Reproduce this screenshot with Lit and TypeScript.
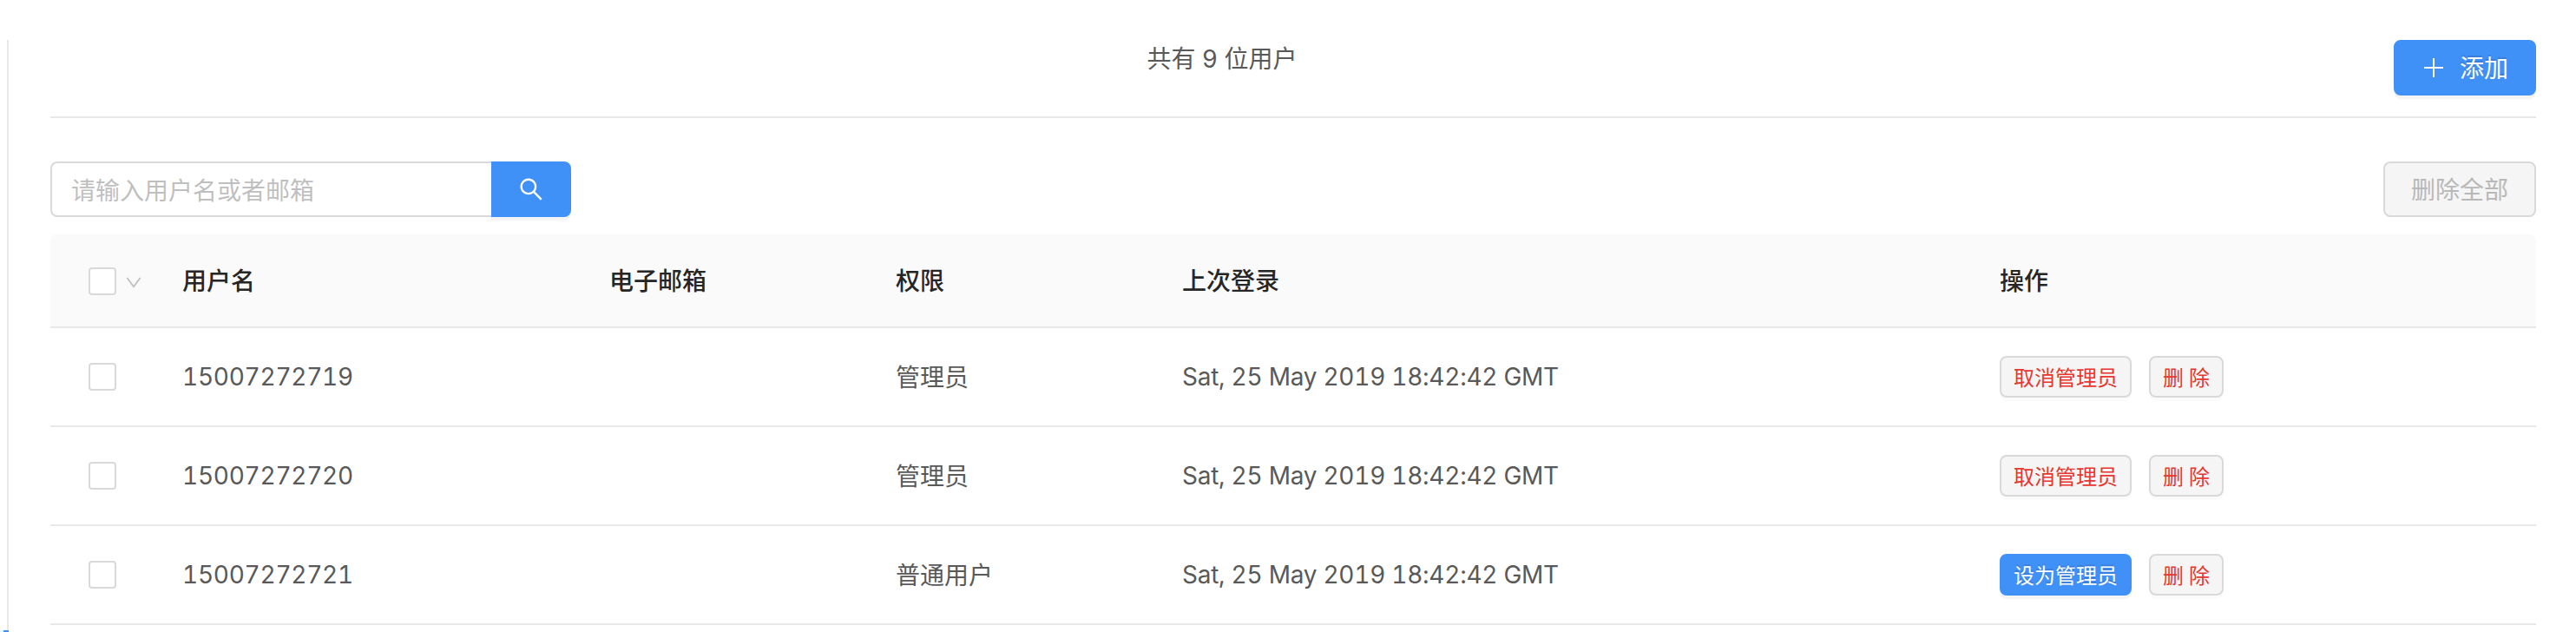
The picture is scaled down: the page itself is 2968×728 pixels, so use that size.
import { LitElement, html, css, nothing } from "lit";
import { customElement, property, state } from "lit/decorators.js";
import { classMap } from "lit/directives/class-map.js";

interface User {
  name: string;
  email: string;
  admin: boolean;
  lastLogin: string;
}

const FONT = css`"Inter", "Noto Sans CJK SC", sans-serif`;

@customElement("ui-button")
class UiButton extends LitElement {
  @property() kind = "default";
  @property() size = "large";
  @property({ type: Boolean }) disabled = false;

  static styles = css`
    :host { display: inline-block; }
    .btn {
      display: flex;
      align-items: center;
      justify-content: center;
      box-sizing: border-box;
      height: 64px;
      margin: 0;
      padding: 0 30px;
      border: 2px solid #d9d9d9;
      border-radius: 8px;
      background: #f5f5f5;
      color: #595959;
      font: 400 28px/40px ${FONT};
      white-space: pre;
      box-shadow: 0 4px 0 rgba(0, 0, 0, 0.015);
    }
    .label { padding-top: 2px; }
    .small { height: 48px; padding: 0 14px; font-size: 24px; word-spacing: -0.7px; }
    .small .label { padding-top: 3px; }
    .danger { color: #e8362f; }
    .primary {
      color: #fff;
      background: #4091f7;
      border-color: #4091f7;
      text-shadow: 0 -2px 0 rgba(0, 0, 0, 0.12);
      box-shadow: 0 4px 0 rgba(0, 0, 0, 0.045);
    }
    .off { color: #b8b8b8; box-shadow: none; }
    ::slotted(svg) { display: block; margin-right: 16px; }
  `;

  render() {
    const classes = {
      btn: true,
      small: this.size === "small",
      primary: this.kind === "primary",
      danger: this.kind === "danger",
      off: this.disabled,
    };
    return html`<button class=${classMap(classes)} ?disabled=${this.disabled}><slot name="icon"></slot><span class="label"><slot></slot></span></button>`;
  }
}

@customElement("app-root")
class AppRoot extends LitElement {
  @state() private total = 9;
  @state() private users: User[] = [
    { name: "15007272719", email: "", admin: true, lastLogin: "Sat, 25 May 2019 18:42:42 GMT" },
    { name: "15007272720", email: "", admin: true, lastLogin: "Sat, 25 May 2019 18:42:42 GMT" },
    { name: "15007272721", email: "", admin: false, lastLogin: "Sat, 25 May 2019 18:42:42 GMT" },
  ];

  static styles = css`
    :host {
      display: flex;
      height: 728px;
      box-sizing: border-box;
      padding-top: 46px;
      overflow: hidden;
      background: #fff;
      color: #595959;
      font: 400 28px/42px ${FONT};
    }
    .menu {
      flex: none;
      width: 10px;
      display: flex;
      flex-direction: column;
    }
    .edge {
      flex: 1;
      border-right: 2px solid #e8e8e8;
    }
    .selected {
      flex: none;
      height: 2px;
      background: #e6f7ff;
      display: flex;
      justify-content: flex-end;
    }
    .bar { width: 6px; background: #4091f7; }
    .content { flex: 1; min-width: 0; padding: 0 46px 0 48px; }
    .head {
      display: flex;
      justify-content: space-between;
      align-items: flex-start;
      height: 88px;
      border-bottom: 2px solid #e8e8e8;
    }
    .count { padding-top: 1px; }
    .tools {
      display: flex;
      justify-content: space-between;
      padding: 50px 0 20px;
    }
    .search { display: flex; width: 600px; height: 64px; }
    .field {
      flex: 1;
      min-width: 0;
      box-sizing: border-box;
      padding: 4px 22px 0;
      border: 2px solid #d9d9d9;
      border-right: 0;
      border-radius: 8px 0 0 8px;
      outline: 0;
      background: #fff;
      font: 400 28px/42px ${FONT};
    }
    .field::placeholder { color: #bfbfbf; opacity: 1; }
    .go {
      display: flex;
      align-items: center;
      justify-content: center;
      width: 92px;
      padding: 0;
      border: 0;
      border-radius: 0 8px 8px 0;
      background: #4091f7;
      color: #fff;
      box-shadow: 0 4px 0 rgba(0, 0, 0, 0.045);
    }
    .row {
      display: grid;
      grid-template-columns: 152px 492px 330px 330px 942px 1fr;
      align-items: center;
      height: 112px;
      border-bottom: 2px solid #e8e8e8;
    }
    .title {
      height: 104px;
      padding-top: 2px;
      border-radius: 8px 8px 0 0;
      background: #fafafa;
      color: #262626;
      font-weight: 500;
    }
    .pick { display: flex; align-items: center; padding-left: 44px; gap: 10px; }
    .box {
      width: 32px;
      height: 32px;
      box-sizing: border-box;
      border: 2px solid #d9d9d9;
      border-radius: 4px;
      background: #fff;
    }
    .num {
      font-feature-settings: "tnum";
      letter-spacing: -0.26px;
      white-space: nowrap;
    }
    .role { padding-top: 2px; }
    .ops { display: flex; gap: 20px; }
    svg { display: block; }
  `;

  private row(u: User) {
    return html`
      <div class="row">
        <div class="pick"><span class="box"></span></div>
        <div class="num">${u.name}</div>
        <div>${u.email || nothing}</div>
        <div class="role">${u.admin ? "管理员" : "普通用户"}</div>
        <div class="num">${u.lastLogin}</div>
        <div class="ops">
          <ui-button size="small" kind=${u.admin ? "danger" : "primary"}>${u.admin ? "取消管理员" : "设为管理员"}</ui-button>
          <ui-button size="small" kind="danger">删 除</ui-button>
        </div>
      </div>
    `;
  }

  render() {
    return html`
      <aside class="menu">
        <div class="edge"></div>
        <div class="selected"><span class="bar"></span></div>
      </aside>
      <main class="content">
        <header class="head">
          <span></span>
          <span class="count">共有 ${this.total} 位用户</span>
          <ui-button kind="primary"><svg slot="icon" width="28" height="28" viewBox="0 0 28 28" fill="none" stroke="currentColor" stroke-width="2"><path d="M14 3v22M3 14h22"/></svg>添加</ui-button>
        </header>
        <section class="tools">
          <div class="search">
            <input class="field" placeholder="请输入用户名或者邮箱" />
            <button class="go">
              <svg width="32" height="32" viewBox="0 0 1024 1024" fill="currentColor">
                <path d="M909.6 854.5L649.9 594.8C690.2 542.7 712 479 712 412c0-80.2-31.3-155.4-87.9-212.1-56.6-56.7-132-87.9-212.1-87.9s-155.5 31.3-212.1 87.9C143.2 256.5 112 331.8 112 412c0 80.1 31.3 155.5 87.9 212.1C256.5 680.8 331.8 712 412 712c67 0 130.6-21.8 182.7-62l259.7 259.6a8.2 8.2 0 0 0 11.6 0l43.6-43.5a8.2 8.2 0 0 0 0-11.6zM570.4 570.4C528 612.7 471.8 636 412 636s-116-23.3-158.4-65.6C211.3 528 188 471.8 188 412s23.3-116.1 65.6-158.4C296 211.3 352.2 188 412 188s116.1 23.2 158.4 65.6S636 352.2 636 412s-23.3 116.1-65.6 158.4z"/>
              </svg>
            </button>
          </div>
          <ui-button disabled>删除全部</ui-button>
        </section>
        <section class="table">
          <div class="row title">
            <div class="pick">
              <span class="box"></span>
              <svg width="20" height="20" viewBox="0 0 20 20" fill="none" stroke="#bfbfbf" stroke-width="1.8"><path d="M2.4 6l7.6 10.3L17.6 6"/></svg>
            </div>
            <div>用户名</div>
            <div>电子邮箱</div>
            <div>权限</div>
            <div>上次登录</div>
            <div>操作</div>
          </div>
          ${this.users.map((u) => this.row(u))}
        </section>
      </main>
    `;
  }
}
